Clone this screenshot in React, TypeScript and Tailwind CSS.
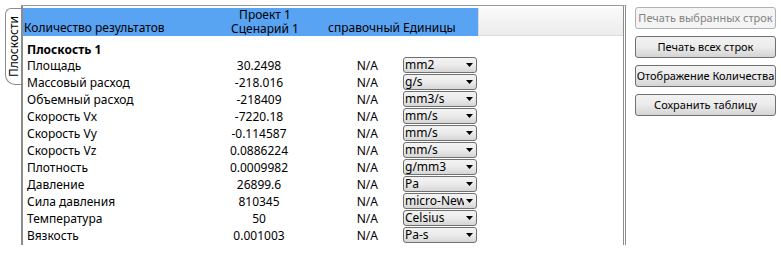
import React from 'react';

// Result rows: label, value, unit shown in the combobox
const ROWS = [
  { label: 'Площадь', value: '30.2498', unit: 'mm2' },
  { label: 'Массовый расход', value: '-218.016', unit: 'g/s' },
  { label: 'Объемный расход', value: '-218409', unit: 'mm3/s' },
  { label: 'Скорость Vx', value: '-7220.18', unit: 'mm/s' },
  { label: 'Скорость Vy', value: '-0.114587', unit: 'mm/s' },
  { label: 'Скорость Vz', value: '0.0886224', unit: 'mm/s' },
  { label: 'Плотность', value: '0.0009982', unit: 'g/mm3' },
  { label: 'Давление', value: '26899.6', unit: 'Pa' },
  { label: 'Сила давления', value: '810345', unit: 'micro-Newton' },
  { label: 'Температура', value: '50', unit: 'Celsius' },
  { label: 'Вязкость', value: '0.001003', unit: 'Pa-s' },
];

const BUTTONS = [
  { text: 'Печать выбранных строк', disabled: true },
  { text: 'Печать всех строк', disabled: false },
  { text: 'Отображение Количества', disabled: false },
  { text: 'Сохранить таблицу', disabled: false },
];

const UnitSelect: React.FC<{ unit: string }> = ({ unit }) => (
  <div className="ml-[3px] w-[74px] h-[16px] flex items-center rounded-[3px] border border-[#707070] bg-gradient-to-b from-[#f3f3f3] via-[#ebebeb] to-[#d6d6d6]">
    <span className="w-[60px] h-[16px] pl-[1px] overflow-hidden whitespace-nowrap leading-[16px]">{unit}</span>
    <svg width="8" height="5" viewBox="0 0 8 5" className="ml-[2px]">
      <path d="M0 0 H7 L3.5 4 Z" fill="#000" />
    </svg>
  </div>
);

export default function App() {
  return (
    <div
      className="w-[781px] h-[267px] flex bg-white text-[12px] text-black overflow-hidden"
      style={{ fontFamily: '"Noto Sans", "Open Sans", sans-serif' }}
    >
      {/* Vertical tab */}
      <div className="w-[21px] shrink-0 pt-[8px] pl-[5px]">
        <div className="w-[16px] h-[77px] border-l border-t border-b border-[#898c95] rounded-tl-[6px] rounded-bl-[10px] bg-white flex items-center justify-center">
          <span className="[writing-mode:vertical-rl] rotate-180 leading-[14px]">Плоскости</span>
        </div>
      </div>

      {/* Table panel */}
      <div className="w-[605px] h-[240px] mt-[5px] shrink-0 border-t border-[#9a9a9a] border-l-2 border-l-[#8c8c8c] border-r-[3px] border-r-[#8c8c8c] [border-right-style:double] pt-[2px] overflow-hidden">
        {/* Header */}
        <div className="flex h-[28px]">
          <div className="w-[455px] flex bg-[#59a3f3] items-end">
            <div className="w-[195px] pl-[1px] pb-[1px] leading-[14px]">Количество результатов</div>
            <div className="w-[94px] text-center leading-[14px]">
              <div>Проект 1</div>
              <div>Сценарий 1</div>
            </div>
            <div className="w-[88px] pb-[1px] text-right leading-[14px]">справочный</div>
            <div className="w-[78px] pl-[3px] pb-[1px] leading-[14px]">Единицы</div>
          </div>
          <div className="flex-1 border-l border-[#dcdcdc] border-b bg-gradient-to-b from-[#fafafa] to-[#ececec]" />
        </div>

        <div className="h-[4px]" />
        <div className="h-[17px] pt-[2px] pl-[4px] leading-[15px] font-bold">Плоскость 1</div>

        {ROWS.map((row, i) => (
          <div key={i} className="flex h-[17px] leading-[17px]">
            <div className="w-[195px] shrink-0 pl-[4px] whitespace-nowrap">{row.label}</div>
            <div className="w-[94px] shrink-0 pr-[12px] text-center whitespace-nowrap">{row.value}</div>
            <div className="w-[88px] shrink-0 pr-[22px] text-right">N/A</div>
            <div className="w-[78px] shrink-0">
              <UnitSelect unit={row.unit} />
            </div>
          </div>
        ))}
      </div>

      {/* Buttons */}
      <div className="ml-[9px] pt-[7px] flex flex-col gap-[7px]">
        {BUTTONS.map((b, i) =>
          b.disabled ? (
            <button
              key={i}
              className="w-[141px] h-[22px] px-0 rounded-[3px] border border-[#adb2b5] bg-[#f4f4f4] text-[#838383] text-[11px] whitespace-nowrap leading-[20px]"
            >
              {b.text}
            </button>
          ) : (
            <button
              key={i}
              className="w-[141px] h-[22px] px-0 rounded-[3px] border border-[#707070] bg-gradient-to-b from-[#f2f2f2] via-[#ebebeb] to-[#d4d4d4] text-[11px] whitespace-nowrap leading-[20px]"
            >
              {b.text}
            </button>
          )
        )}
      </div>
    </div>
  );
}
